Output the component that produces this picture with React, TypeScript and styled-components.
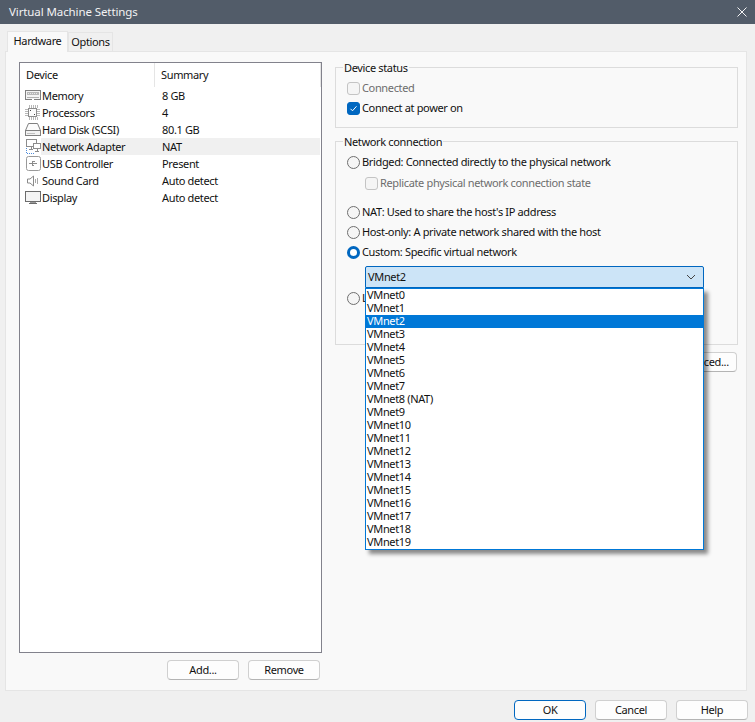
import React from "react";
import styled, { createGlobalStyle } from "styled-components";

const Global = createGlobalStyle`
  html, body { margin: 0; padding: 0; background: #f0f0f0; }
  * { box-sizing: border-box; }
  body { font-family: "Noto Sans", "Open Sans", sans-serif; font-size: 11px; letter-spacing: -0.35px; color: #111; }
`;

const Dialog = styled.div`
  width: 755px; height: 722px; display: flex; flex-direction: column; background: #f0f0f0; overflow: hidden;
  line-height: 16px;
`;
const TitleBar = styled.div`
  height: 24px; flex: none; background: #525c69; color: #f2f3f4; display: flex; align-items: center;
  justify-content: space-between; padding: 0 8px 0 9px; font-size: 11.5px; letter-spacing: -0.1px;
`;
const CloseIcon = styled.svg`width: 10px; height: 10px; display: block;`;
const TabStrip = styled.div`
  height: 27px; flex: none; display: flex; align-items: flex-end; padding-left: 7px;
`;
const Tab = styled.div<{ $active?: boolean }>`
  height: ${p => (p.$active ? 21 : 19)}px; width: ${p => (p.$active ? 61 : 45)}px;
  background: ${p => (p.$active ? "#f9f9f9" : "#f0f0f0")};
  border: 1px solid #e5e5e5; border-bottom: none; text-align: center;
  margin-bottom: ${p => (p.$active ? -1 : 0)}px; position: relative; z-index: ${p => (p.$active ? 1 : 0)};
  line-height: ${p => (p.$active ? 17 : 18)}px;
`;
const TabPanel = styled.div`
  height: 640px; flex: none; margin: 0 8px 0 5px; background: #f9f9f9; border: 1px solid #e5e5e5;
  display: flex; padding: 10px 8px 0 13px;
`;
const LeftColumn = styled.div`width: 303px; flex: none; display: flex; flex-direction: column;`;
const DeviceList = styled.div`
  height: 591px; background: #fff; border: 1px solid #82828c; display: flex; flex-direction: column;
`;
const HeaderRow = styled.div`
  height: 24px; display: grid; grid-template-columns: 135px 1fr; align-items: center; flex: none;
`;
const HeaderCell = styled.div`
  height: 24px; line-height: 24px; padding-left: 6px; border-right: 1px solid #e5e5e5;
`;
const DeviceRow = styled.div`
  height: 17px; display: grid; grid-template-columns: 21px 114px 1fr; align-items: center;
`;
const IconCell = styled.div`
  height: 17px; display: flex; align-items: center; justify-content: flex-end;
`;
const DeviceName = styled.div<{ $selected?: boolean }>`
  height: 17px; line-height: 17px; padding-left: 1px; background: ${p => (p.$selected ? "#f0f0f0" : "transparent")};
`;
const DeviceSummary = styled.div<{ $selected?: boolean }>`
  height: 17px; line-height: 17px; padding-left: 7px; margin-right: 1px; background: ${p => (p.$selected ? "#f0f0f0" : "transparent")};
`;
const ListActions = styled.div`
  display: flex; justify-content: flex-end; gap: 9px; padding: 7px 2px 0 0;
`;
const Button = styled.div<{ $primary?: boolean }>`
  width: 72px; height: 20px; border-radius: 4px; background: #fdfdfd; text-align: center; line-height: 18px;
  border: 1px solid ${p => (p.$primary ? "#0067c0" : "#d0d0d0")};
  border-bottom-color: ${p => (p.$primary ? "#0067c0" : "#b4b4b4")};
`;
const RightColumn = styled.div`flex: 1; padding: 5px 0 0 13px; display: flex; flex-direction: column;`;
const GroupBox = styled.fieldset<{ $height: number }>`
  position: relative; margin: 0 0 13px; padding: 0; height: ${p => p.$height}px; border: 1px solid #dcdcdc;
  display: block; width: 403px; flex: none;
`;
const GroupLabel = styled.div`
  position: absolute; left: 7px; top: -8px; padding: 0 1px; background: #f9f9f9; line-height: 15px;
`;
const GroupBody = styled.div<{ $top: number }>`
  padding: ${p => p.$top}px 0 0 11px; display: flex; flex-direction: column;
`;
const OptionRow = styled.div<{ $height?: number; $indent?: boolean; $disabled?: boolean }>`
  height: ${p => p.$height ?? 20}px; display: flex; align-items: center; gap: 2px;
  padding-left: ${p => (p.$indent ? 18 : 0)}px;
  color: ${p => (p.$disabled ? "#6d6d6d" : "#111")}; white-space: nowrap; flex: none;
`;
const CheckBox = styled.div<{ $checked?: boolean }>`
  width: 13px; height: 13px; border-radius: 3px; flex: none; display: flex; align-items: center; justify-content: center;
  background: ${p => (p.$checked ? "#0067c0" : "#f5f5f5")};
  border: 1px solid ${p => (p.$checked ? "#0067c0" : "#c4c4c4")};
`;
const Radio = styled.div<{ $checked?: boolean }>`
  width: 13px; height: 13px; border-radius: 50%; flex: none;
  background: ${p => (p.$checked ? "#fff" : "#f5f5f5")};
  border: ${p => (p.$checked ? "3.5px solid #0067c0" : "1px solid #6f6f6f")};
`;
const Combo = styled.div`
  margin: 4px 0 0 18px; width: 339px; height: 22px; background: #cce4f7; border: 1px solid #0067c0; border-radius: 2px 2px 0 0;
  display: flex; align-items: center; justify-content: space-between; padding: 0 7px 0 2px; flex: none;
`;
const Popup = styled.div`
  position: absolute; left: 29px; top: 146px; width: 339px; height: 262px; background: #fff; border: 1px solid #0078d7;
  box-shadow: 4px 4px 4px rgba(0, 0, 0, 0.45); z-index: 5; line-height: 12px; overflow: hidden;
`;
const PopupItem = styled.div<{ $selected?: boolean }>`
  height: 13px; padding-left: 1px; background: ${p => (p.$selected ? "#0078d7" : "transparent")};
  color: ${p => (p.$selected ? "#fff" : "#111")}; white-space: nowrap;
`;
const AdvancedRow = styled.div`display: flex; justify-content: flex-end; width: 402px; margin-top: -6px;`;
const Footer = styled.div`
  flex: 1; display: flex; justify-content: flex-end; align-items: flex-start; gap: 9px; padding: 9px 7px 0 0;
`;

const Icon: React.FC<{ children: React.ReactNode }> = ({ children }) => (
  <svg width="17" height="17" viewBox="0 0 17 17" fill="none" stroke="#7c7c7c" strokeWidth="1" shapeRendering="crispEdges">{children}</svg>
);
const icons: Record<string, React.ReactNode> = {
  Memory: (
    <Icon>
      <rect x="1.5" y="3.5" width="15" height="9" fill="#f4f4f4" stroke="#808080" />
      <rect x="3" y="5" width="12" height="3" fill="#b8b8b8" stroke="none" />
      <path d="M4 6h1M6 6h1M8 6h1M10 6h1M12 6h1" stroke="#e8e8e8" />
      <path d="M3 10.5h12" stroke="#b0b0b0" />
      <path d="M8 12.5h2" stroke="#fff" />
    </Icon>
  ),
  Processors: (
    <Icon>
      <rect x="4.5" y="4.5" width="8" height="8" fill="#fbfbfb" stroke="#8c8c8c" />
      <path d="M5 1v3M7 1v3M9 1v3M11 1v3M13 1v3M5 13v3M7 13v3M9 13v3M11 13v3M13 13v3M1 5h3M1 7h3M1 9h3M1 11h3M13 5h3M13 7h3M13 9h3M13 11h3" stroke="#b8b8b8" />
      <path d="M6 6h1v1H6zM10 10h1v1h-1z" fill="#444" stroke="none" />
    </Icon>
  ),
  "Hard Disk (SCSI)": (
    <Icon>
      <path d="M4.5 2.5h9l3 7H1.5z" fill="#fcfcfc" stroke="#808080" shapeRendering="auto" />
      <rect x="1.5" y="9.5" width="15" height="5" fill="#f2f2f2" stroke="#808080" />
      <path d="M3 12.5h8" stroke="#c0c0c0" />
    </Icon>
  ),
  "Network Adapter": (
    <Icon>
      <rect x="2.5" y="1.5" width="10" height="7" fill="#fff" stroke="#8c8c8c" />
      <rect x="9.5" y="5.5" width="7" height="5" fill="#fff" stroke="#8c8c8c" />
      <path d="M13 11v2M11 13.5h4M7 9v2M5 11.5h4" stroke="#8c8c8c" />
      <path d="M2.5 10v5.5h8" stroke="#4f8ddb" strokeDasharray="1 1" />
    </Icon>
  ),
  "USB Controller": (
    <Icon>
      <rect x="2.5" y="1.5" width="14" height="14" rx="2" fill="#fff" stroke="#9a9a9a" shapeRendering="auto" />
      <path d="M5 8.5h8M8 6.5h3M8 10.5h2M8 7v3" stroke="#8c8c8c" />
    </Icon>
  ),
  "Sound Card": (
    <Icon>
      <path d="M3.5 7h2.5l3.5-3v10l-3.5-3H3.5z" fill="#fff" stroke="#8a8a8a" shapeRendering="auto" />
      <path d="M11.5 7v4M13.5 6v6" stroke="#a8a8a8" />
    </Icon>
  ),
  Display: (
    <Icon>
      <rect x="1.5" y="2.5" width="15" height="10" fill="#f4f4f4" stroke="#6c6c6c" />
      <path d="M6 13.5h6" stroke="#9a9a9a" />
      <path d="M5 14.5h8" stroke="#6c6c6c" />
    </Icon>
  ),
};

const devices = [
  ["Memory", "8 GB"],
  ["Processors", "4"],
  ["Hard Disk (SCSI)", "80.1 GB"],
  ["Network Adapter", "NAT"],
  ["USB Controller", "Present"],
  ["Sound Card", "Auto detect"],
  ["Display", "Auto detect"],
];
const nets = Array.from({ length: 20 }, (_, i) => (i === 8 ? "VMnet8 (NAT)" : `VMnet${i}`));

export default function App() {
  return (
    <Dialog>
      <Global />
      <TitleBar>
        <span>Virtual Machine Settings</span>
        <CloseIcon viewBox="0 0 10 10"><path d="M0.5 0.5l9 9M9.5 0.5l-9 9" stroke="#f2f3f4" strokeWidth="1" fill="none" /></CloseIcon>
      </TitleBar>
      <TabStrip>
        <Tab $active>Hardware</Tab>
        <Tab>Options</Tab>
      </TabStrip>
      <TabPanel>
        <LeftColumn>
          <DeviceList>
            <HeaderRow>
              <HeaderCell>Device</HeaderCell>
              <HeaderCell>Summary</HeaderCell>
            </HeaderRow>
            {devices.map(([name, summary]) => {
              const sel = name === "Network Adapter";
              return (
                <DeviceRow key={name}>
                  <IconCell>{icons[name]}</IconCell>
                  <DeviceName $selected={sel}>{name}</DeviceName>
                  <DeviceSummary $selected={sel}>{summary}</DeviceSummary>
                </DeviceRow>
              );
            })}
          </DeviceList>
          <ListActions>
            <Button>Add...</Button>
            <Button>Remove</Button>
          </ListActions>
        </LeftColumn>
        <RightColumn>
          <GroupBox $height={61}>
            <GroupLabel>Device status</GroupLabel>
            <GroupBody $top={10}>
              <OptionRow $disabled><CheckBox />Connected</OptionRow>
              <OptionRow>
                <CheckBox $checked>
                  <svg width="9" height="9" viewBox="0 0 9 9"><path d="M1.5 4.8l2 2 4-4.5" stroke="#fff" strokeWidth="1" fill="none" /></svg>
                </CheckBox>
                Connect at power on
              </OptionRow>
            </GroupBody>
          </GroupBox>
          <GroupBox $height={204}>
            <GroupLabel>Network connection</GroupLabel>
            <GroupBody $top={10}>
              <OptionRow><Radio />Bridged: Connected directly to the physical network</OptionRow>
              <OptionRow $indent $height={22} $disabled><CheckBox />Replicate physical network connection state</OptionRow>
              <OptionRow $height={8} />
              <OptionRow><Radio />NAT: Used to share the host's IP address</OptionRow>
              <OptionRow><Radio />Host-only: A private network shared with the host</OptionRow>
              <OptionRow><Radio $checked />Custom: Specific virtual network</OptionRow>
              <Combo>
                <span>VMnet2</span>
                <svg width="10" height="6" viewBox="0 0 10 6"><path d="M1 1l4 4 4-4" stroke="#444" strokeWidth="1" fill="none" /></svg>
              </Combo>
              <OptionRow $height={20}><Radio />LAN segment:</OptionRow>
            </GroupBody>
            <Popup>
              {nets.map((n, i) => <PopupItem key={n} $selected={i === 2}>{n}</PopupItem>)}
            </Popup>
          </GroupBox>
          <AdvancedRow><Button>Advanced...</Button></AdvancedRow>
        </RightColumn>
      </TabPanel>
      <Footer>
        <Button $primary>OK</Button>
        <Button>Cancel</Button>
        <Button>Help</Button>
      </Footer>
    </Dialog>
  );
}
